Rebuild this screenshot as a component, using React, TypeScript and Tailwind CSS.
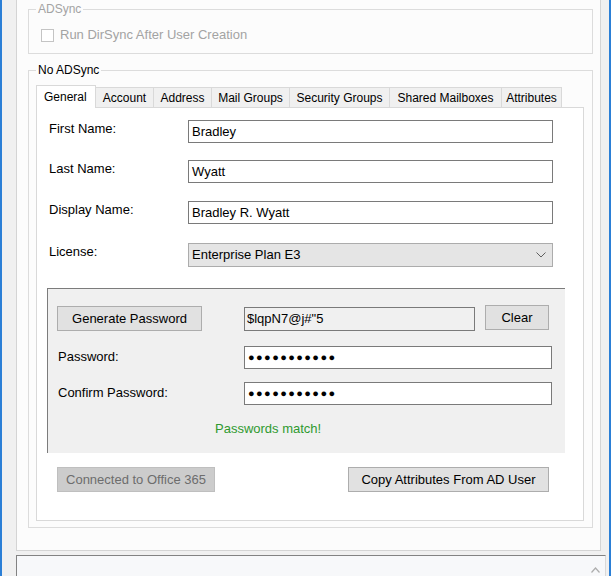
import React from 'react';

const tabs = [
    { label: 'General', w: 'w-[60px]', active: true },
    { label: 'Account', w: 'w-[59px]' },
    { label: 'Address', w: 'w-[59px]' },
    { label: 'Mail Groups', w: 'w-[79px]' },
    { label: 'Security Groups', w: 'w-[101px]' },
    { label: 'Shared Mailboxes', w: 'w-[113px]' },
    { label: 'Attributes', w: 'w-[61px]' },
];

function TextBox({ value, className }: { value: string; className: string }) {
    return (
        <div className={`flex items-center border border-[#7a7a7a] bg-white pl-[3px] ${className}`}>
            <span className="whitespace-nowrap">{value}</span>
        </div>
    );
}

function PasswordBox() {
    return (
        <div className="flex h-[23px] w-[308px] items-center border border-[#7a7a7a] bg-white pl-[3px]">
            <span className="text-[11px] leading-none tracking-[1.4px]">●●●●●●●●●●●</span>
        </div>
    );
}

export default function App() {
    return (
        <div className="flex h-[576px] w-[611px] overflow-hidden border-x-2 border-[#2b7fd6] bg-[#f0f0f0] font-['Liberation_Sans',Arial,sans-serif] text-[13px] text-black">
            <div className="flex flex-1 flex-col">
                {/* scrolled panel */}
                <div className="ml-[14px] h-[551px] w-[585px] shrink-0 border-x border-b border-[#d4d4d4] bg-[#fcfcfc]">
                    <fieldset className="ml-[11px] mt-[1px] h-[53px] w-[565px] border border-[#dcdcdc]">
                        <legend className="ml-[7px] px-[2px] text-[12px] leading-[16px] text-[#a3a3a3]">ADSync</legend>
                        <div className="ml-[12px] mt-[10px] flex items-center">
                            <div className="h-[13px] w-[13px] border border-[#c4c4c4] bg-white" />
                            <span className="ml-[6px] leading-[16px] text-[#a3a3a3]">Run DirSync After User Creation</span>
                        </div>
                    </fieldset>

                    <fieldset className="ml-[11px] mt-[8px] h-[466px] w-[565px] border border-[#dcdcdc]">
                        <legend className="ml-[7px] px-[2px] text-[12px] leading-[16px]">No ADSync</legend>
                        <div className="ml-[7px] mt-[7px]">
                            <div className="flex h-[22px] items-end text-[12px]">
                                {tabs.map((t) =>
                                    t.active ? (
                                        <div
                                            key={t.label}
                                            className={`relative z-10 -mb-px flex h-[23px] items-center border-x border-t border-[#d9d9d9] bg-white pl-[7px] ${t.w}`}
                                        >
                                            {t.label}
                                        </div>
                                    ) : (
                                        <div
                                            key={t.label}
                                            className={`-ml-px flex h-[20px] items-center justify-center border-x border-t border-[#d9d9d9] bg-[#f0f0f0] ${t.w}`}
                                        >
                                            {t.label}
                                        </div>
                                    ),
                                )}
                            </div>

                            <div className="h-[414px] w-[548px] border border-[#d9d9d9] bg-white">
                                <div className="ml-[12px] mt-[12px] flex h-[23px] items-start">
                                    <span className="w-[139px] pt-[1px] leading-[16px]">First Name:</span>
                                    <TextBox value="Bradley" className="h-[23px] w-[365px]" />
                                </div>
                                <div className="ml-[12px] mt-[17px] flex h-[23px] items-start">
                                    <span className="w-[139px] pt-[1px] leading-[16px]">Last Name:</span>
                                    <TextBox value="Wyatt" className="h-[23px] w-[365px]" />
                                </div>
                                <div className="ml-[12px] mt-[18px] flex h-[23px] items-start">
                                    <span className="w-[139px] pt-[1px] leading-[16px]">Display Name:</span>
                                    <TextBox value="Bradley R. Wyatt" className="h-[23px] w-[365px]" />
                                </div>
                                <div className="ml-[12px] mt-[19px] flex h-[24px] items-start">
                                    <span className="w-[139px] pt-[1px] leading-[16px]">License:</span>
                                    <div className="flex h-[24px] w-[365px] items-center justify-between border border-[#acacac] bg-[#e5e5e5] pl-[3px] pr-[6px]">
                                        <span>Enterprise Plan E3</span>
                                        <svg width="10" height="6" viewBox="0 0 10 6" fill="none">
                                            <polyline points="0.5,0.5 5,5 9.5,0.5" stroke="#5f5f5f" strokeWidth="1" />
                                        </svg>
                                    </div>
                                </div>

                                {/* password panel */}
                                <div className="ml-[10px] mt-[21px] h-[165px] w-[518px] border-l border-t border-[#7c7c7c] bg-[#f0f0f0]">
                                    <div className="ml-[9px] mt-[16px] flex h-[26px] items-start">
                                        <button className="mt-px flex h-[25px] w-[145px] items-center justify-center border border-[#adadad] bg-[#e1e1e1]">
                                            Generate Password
                                        </button>
                                        <div className="ml-[42px] mt-[2px] flex h-[24px] w-[231px] items-center border border-[#7a7a7a] bg-[#f0f0f0] pl-[2px]">
                                            $lqpN7@j#"5
                                        </div>
                                        <button className="ml-[10px] flex h-[25px] w-[64px] items-center justify-center border border-[#adadad] bg-[#e1e1e1]">
                                            Clear
                                        </button>
                                    </div>
                                    <div className="ml-[10px] mt-[15px] flex h-[23px] items-start">
                                        <span className="w-[186px] pt-[3px] leading-[16px]">Password:</span>
                                        <PasswordBox />
                                    </div>
                                    <div className="ml-[10px] mt-[13px] flex h-[23px] items-start">
                                        <span className="w-[186px] pt-[3px] leading-[16px]">Confirm Password:</span>
                                        <PasswordBox />
                                    </div>
                                    <div className="ml-[167px] mt-[16px] leading-[16px] text-[#2f9a2f]">Passwords match!</div>
                                </div>

                                <div className="ml-[20px] mt-[14px] flex">
                                    <button className="flex h-[25px] w-[158px] items-center justify-center border border-[#bfbfbf] bg-[#cccccc] text-[#6d6d6d]">
                                        Connected to Office 365
                                    </button>
                                    <button className="ml-[133px] flex h-[25px] w-[201px] items-center justify-center border border-[#adadad] bg-[#e1e1e1]">
                                        Copy Attributes From AD User
                                    </button>
                                </div>
                            </div>
                        </div>
                    </fieldset>
                </div>

                {/* log box */}
                <div className="ml-[14px] mt-[4px] flex h-[30px] w-[590px] shrink-0 justify-end border-l border-t border-r border-[#828282] border-r-[#d9d9d9] bg-[#f7f8fa] pr-[5px] pt-[11px]">
                    <svg width="9" height="6" viewBox="0 0 9 6" fill="none">
                        <polyline points="0.5,5.5 4.5,1 8.5,5.5" stroke="#adadad" strokeWidth="1.2" />
                    </svg>
                </div>
            </div>
        </div>
    );
}
